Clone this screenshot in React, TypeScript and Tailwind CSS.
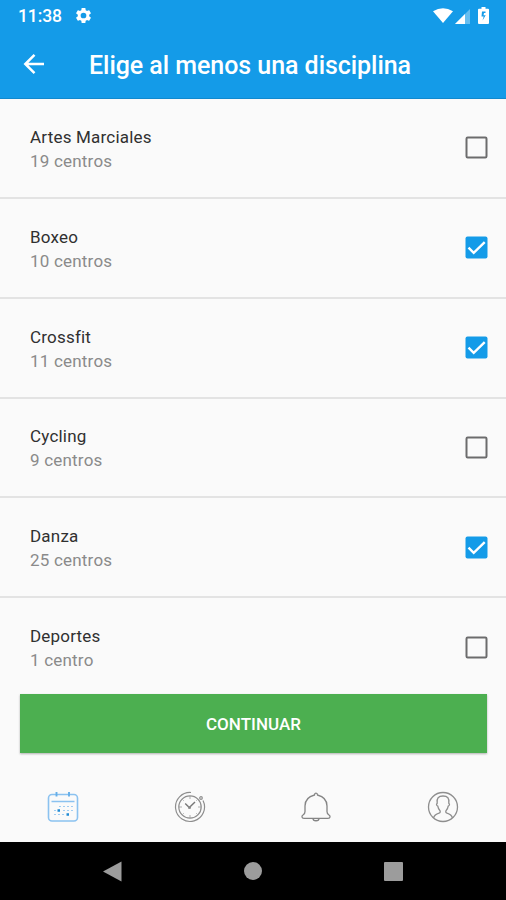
import React from "react";

type Discipline = { name: string; centers: string; checked: boolean; height: string };

const disciplines: Discipline[] = [
  { name: "Artes Marciales", centers: "19 centros", checked: false, height: "h-[100px]" },
  { name: "Boxeo", centers: "10 centros", checked: true, height: "h-[100px]" },
  { name: "Crossfit", centers: "11 centros", checked: true, height: "h-[100px]" },
  { name: "Cycling", centers: "9 centros", checked: false, height: "h-[99.5px]" },
  { name: "Danza", centers: "25 centros", checked: true, height: "h-[100px]" },
  { name: "Deportes", centers: "1 centro", checked: false, height: "h-[96px]" },
];

function StatusBar() {
  return (
    <div className="flex h-8 items-center pl-[18px] pr-[17px] text-white">
      <span className="w-[56px] text-[17.5px] font-medium leading-8 tracking-[-0.1px]">11:38</span>
      <svg className="mb-0.5 size-[19px]" viewBox="0 0 24 24" fill="currentColor">
        <path d="M19.14 12.94c.04-.3.06-.61.06-.94s-.02-.64-.07-.94l2.03-1.58c.18-.14.23-.41.12-.61l-1.92-3.32c-.12-.22-.37-.29-.59-.22l-2.39.96c-.5-.38-1.03-.7-1.62-.94L14.4 2.81c-.04-.24-.24-.41-.48-.41h-3.84c-.24 0-.43.17-.47.41l-.36 2.54c-.59.24-1.13.57-1.62.94l-2.39-.96c-.22-.08-.47 0-.59.22L2.74 8.87c-.12.21-.08.47.12.61l2.03 1.58c-.05.3-.09.63-.09.94s.02.64.07.94l-2.03 1.58c-.18.14-.23.41-.12.61l1.92 3.32c.12.22.37.29.59.22l2.39-.96c.5.38 1.03.7 1.62.94l.36 2.54c.05.24.24.41.48.41h3.84c.24 0 .44-.17.47-.41l.36-2.54c.59-.24 1.13-.56 1.62-.94l2.39.96c.22.08.47 0 .59-.22l1.92-3.32c.12-.22.07-.47-.12-.61l-2.01-1.58zM12 15.6a3.6 3.6 0 1 1 0-7.2 3.6 3.6 0 0 1 0 7.2z" />
      </svg>
      <div className="mb-px ml-auto flex items-end">
        <svg className="mb-px h-[15px] w-5" viewBox="0 0 20 15" fill="currentColor">
          <path d="M0 3.3Q10-3 20 3.3L10 15Z" />
        </svg>
        <svg className="ml-[2px] h-[15px] w-[15px]" viewBox="0 0 15 15" fill="currentColor">
          <path d="M15 0V15H0Z" opacity=".35" />
          <path d="M10 5V15H0Z" />
        </svg>
        <svg className="ml-2 h-[17px] w-[11px]" viewBox="0 0 11 17" fill="currentColor">
          <path fillRule="evenodd" d="M3.500 0h4v1.700H10q1 0 1 1V16q0 1-1 1H1q-1 0-1-1V2.700q0-1 1-1h2.500ZM7.500 4.500H4L3.500 9.500h2.200L4.500 13.500 7.700 8.300H5.500L6 6H7.500Z" />
        </svg>
      </div>
    </div>
  );
}

function Checkbox({ checked }: { checked: boolean }) {
  return (
    <svg className="size-[23px]" viewBox="0 0 23 23" fill="none">
      {checked ? (
        <>
          <rect x=".5" y=".5" width="22" height="22" rx="2" fill="#149be8" />
          <path d="m3.500 11.700 5.200 5.100 11-10.600" stroke="white" strokeWidth="2.400" />
        </>
      ) : (
        <rect x="1.500" y="1.500" width="20" height="20" rx="1.200" stroke="#6c6c6d" strokeWidth="2" />
      )}
    </svg>
  );
}

function CalendarIcon() {
  return (
    <svg className="size-8" viewBox="0 0 32 32" fill="none" stroke="#8bc2f0">
      <rect x="1.500" y="3.500" width="29" height="26.500" rx="3.500" strokeWidth="1.600" />
      <path d="M4.500 10.500h23" strokeWidth="1.500" />
      <path d="M9.500 1v4.500M22 1v4.500" stroke="#65afe9" strokeWidth="1.900" />
      <path d="M12 15.500h2m2 0h2m2 0h2m2 0h2M7 19.500h2m7 0h2m2 0h2m2 0h2M7 23.500h2m2 0h2m2 0h2" strokeWidth="1.200" opacity=".8" />
      <path d="M10.500 19.500H13m6.500 4H22" stroke="#218bd4" strokeWidth="2.300" />
    </svg>
  );
}

function ClockIcon() {
  return (
    <svg className="size-8" viewBox="0 0 32 32" fill="none" stroke="#8e8e8e" strokeWidth="1.200">
      <path d="M17 1.500A14.500 14.500 0 1 0 29 9.500" />
      <circle cx="16" cy="16" r="11.200" />
      <circle cx="27" cy="7" r="1.300" />
      <path d="m11.200 12.500 4.100 4 5.700-5.600" stroke="#777" strokeWidth="1.400" />
      <circle cx="15.500" cy="16.500" r="1" />
      <path d="M16 5v3m0 16v3M5 16h3m16 0h3M8.500 8.500l1.200 1.200m12.600 12.600 1.200 1.200M8.500 23.500l1.200-1.200M22.300 9.700l1.200-1.200" strokeWidth=".7" />
    </svg>
  );
}

function BellIcon() {
  return (
    <svg className="size-8" viewBox="0 0 32 32" fill="none" stroke="#858585" strokeWidth="1.300" strokeLinejoin="round">
      <path d="M14.500 4C14.500 1.500 17.500 1.500 17.500 4c6 1.500 9.500 5.500 9.500 11v5.500c0 1.600.5 2.500 1.700 3.200 2 1.300 1.800 3.600-.7 3.600H4c-2.500 0-2.700-2.300-.7-3.600C4.500 23 5 22.100 5 20.500V15C5 9.500 8.500 5.500 14.500 4Z" />
      <path d="M13 27.500c0 3 6 3 6 0" />
    </svg>
  );
}

function ProfileIcon() {
  return (
    <svg className="size-8" viewBox="0 0 32 32" fill="none" stroke="#8e8e8e" strokeWidth="1.300">
      <circle cx="16" cy="16" r="14.500" />
      <path d="M6.500 27c.8-3 2.800-4 5.500-4.800 1.200-.4 1.500-1.200 1-2.500-1.500-1.500-2-3-2.200-4.500-1.600-.8-1.600-2-.6-3C9.500 7.200 11.400 5 16 5s6.500 2.200 5.800 7.200c1 1 1 2.200-.6 3-.2 1.500-.7 3-2.200 4.500-.5 1.300-.2 2.100 1 2.500 2.700.8 4.700 1.800 5.500 4.800" />
    </svg>
  );
}

export default function App() {
  return (
    <main className="flex h-[900px] w-[506px] flex-col overflow-hidden bg-[#fafafa] font-[Roboto,sans-serif]">
      <header className="h-[98.5px] shrink-0 border-b border-[#1189ce] bg-[#149be8] text-white">
        <StatusBar />
        <div className="flex h-[66px] items-center pl-[23px]">
          <svg className="mb-0.5 size-[22px]" viewBox="0 0 22 22" fill="none" stroke="currentColor" strokeWidth="2.500">
            <path d="M21 11H3M11.500 1.800 2.300 11l9.200 9.200" />
          </svg>
          <h1 className="ml-11 whitespace-nowrap pt-0.5 text-[25px] font-medium tracking-[-0.05px]">Elige al menos una disciplina</h1>
        </div>
      </header>

      <section className="shrink-0">
        {disciplines.map((item, index) => (
          <div
            key={item.name}
            className={`flex items-center justify-between pl-[30px] pr-[18px] ${item.height} ${index < 5 ? "border-b-2 border-[#e3e3e3]" : "pt-0.5"}`}
          >
            <div className="pt-0.5 text-[17px] leading-6 tracking-[0.2px]">
              <div className="text-[#303030]">{item.name}</div>
              <div className="text-[#8a8a8a]">{item.centers}</div>
            </div>
            <Checkbox checked={item.checked} />
          </div>
        ))}
      </section>

      <button className="mx-5 mr-[19px] h-[59px] shrink-0 bg-[#4caf50] pt-0.5 text-[17px] font-medium tracking-[0.05px] text-white shadow-[0_1px_2px_rgba(0,0,0,0.3)]">
        CONTINUAR
      </button>

      <nav className="grid min-h-0 flex-1 grid-cols-4 place-items-center pt-[18px]">
        <CalendarIcon />
        <ClockIcon />
        <BellIcon />
        <ProfileIcon />
      </nav>

      <footer className="flex h-[58px] shrink-0 items-center justify-between bg-black pl-[103px] pr-[103px] text-[#9c9c9c]">
        <svg className="h-[21px] w-[19px]" viewBox="0 0 19 21" fill="currentColor"><path d="M18.500.5v20L0 10.500Z" /></svg>
        <span className="size-[18px] rounded-full bg-current" />
        <span className="size-[19px] rounded-[1px] bg-current" />
      </footer>
    </main>
  );
}
